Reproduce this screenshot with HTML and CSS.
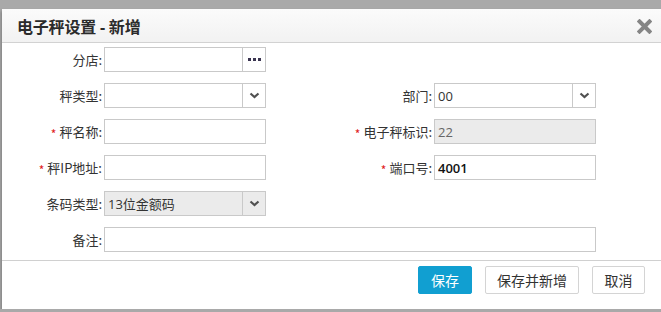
FILE: index.html
```html
<!DOCTYPE html>
<html lang="zh-CN">
<head>
    <meta charset="UTF-8">
    <title>电子秤设置 - 新增</title>
    <link rel="stylesheet" href="styles.css">
</head>
<body>
    <div class="dialog">
        <div class="dialog-header">
            <span class="dialog-title">电子秤设置 - 新增</span>
            <span class="dialog-close">
                <svg width="15" height="15" viewBox="0 0 15 15">
                    <path d="M2.5 2.5 L12.5 12.5 M12.5 2.5 L2.5 12.5" stroke="#858585" stroke-width="4" stroke-linecap="square"/>
                </svg>
            </span>
        </div>

        <div class="form">
            <label class="label">分店:</label>
            <div class="field">
                <input class="field-input" type="text">
                <span class="field-btn">
                    <svg width="13" height="4" viewBox="0 0 13 4">
                        <rect x="0" y="0" width="3" height="3" fill="#3a3450"/>
                        <rect x="5" y="0" width="3" height="3" fill="#3a3450"/>
                        <rect x="10" y="0" width="3" height="3" fill="#3a3450"/>
                    </svg>
                </span>
            </div>
            <div class="blank"></div>
            <div class="blank"></div>

            <label class="label">秤类型:</label>
            <div class="field">
                <input class="field-input" type="text">
                <span class="field-btn">
                    <svg width="11" height="7" viewBox="0 0 11 7">
                        <path d="M1.5 1.5 L5.5 5 L9.5 1.5" fill="none" stroke="#505050" stroke-width="2.2"/>
                    </svg>
                </span>
            </div>
            <label class="label">部门:</label>
            <div class="field">
                <input class="field-input" type="text" value="00">
                <span class="field-btn">
                    <svg width="11" height="7" viewBox="0 0 11 7">
                        <path d="M1.5 1.5 L5.5 5 L9.5 1.5" fill="none" stroke="#505050" stroke-width="2.2"/>
                    </svg>
                </span>
            </div>

            <label class="label"><span class="req">*</span> 秤名称:</label>
            <div class="field">
                <input class="field-input" type="text">
            </div>
            <label class="label"><span class="req">*</span> 电子秤标识:</label>
            <div class="field disabled">
                <input class="field-input" type="text" value="22" disabled>
            </div>

            <label class="label"><span class="req">*</span> 秤IP地址:</label>
            <div class="field">
                <input class="field-input" type="text">
            </div>
            <label class="label"><span class="req">*</span> 端口号:</label>
            <div class="field">
                <input class="field-input strong" type="text" value="4001">
            </div>

            <label class="label">条码类型:</label>
            <div class="field disabled">
                <input class="field-input dark" type="text" value="13位金额码" disabled>
                <span class="field-btn">
                    <svg width="11" height="7" viewBox="0 0 11 7">
                        <path d="M1.5 1.5 L5.5 5 L9.5 1.5" fill="none" stroke="#505050" stroke-width="2.2"/>
                    </svg>
                </span>
            </div>
            <div class="blank"></div>
            <div class="blank"></div>

            <label class="label">备注:</label>
            <div class="field wide">
                <input class="field-input" type="text">
            </div>
        </div>

        <div class="dialog-footer">
            <button class="btn btn-primary">保存</button>
            <button class="btn btn-wide">保存并新增</button>
            <button class="btn">取消</button>
        </div>
    </div>
</body>
</html>
```

FILE: styles.css
```css
body {
    margin: 0;
    background-color: #a9a9a9;
    font-family: "Open Sans", "Noto Sans CJK SC", sans-serif;
    color: #333;
    overflow: hidden;
}
.dialog {
    margin: 9px 0 0 2px;
    width: 659px;
    height: 300px;
    background: white;
    box-shadow: -1px 2px 3px rgba(0,0,0,0.25);
}
.dialog-header {
    height: 33px;
    background: linear-gradient(#fbfbfb, #f2f2f2);
    border-bottom: 1px solid #d2d2d2;
    display: flex;
    align-items: center;
    justify-content: space-between;
    padding: 0 9px 0 15px;
}
.dialog-title {
    font-size: 16px;
    font-weight: bold;
    color: #2b2b2b;
    letter-spacing: -0.2px;
}
.dialog-close {
    display: flex;
    margin-top: 2px;
}
.form {
    display: grid;
    grid-template-columns: 100px 162px 164px 162px;
    grid-auto-rows: 25px;
    column-gap: 2px;
    row-gap: 11px;
    padding-top: 4px;
}
.label {
    font-family: "Noto Sans CJK SC", sans-serif;
    font-size: 13px;
    color: #333;
    text-align: right;
    line-height: 25px;
    white-space: nowrap;
}
.req {
    color: #e02020;
    font-size: 12px;
    position: relative;
    top: 2px;
}
.field {
    display: flex;
    border: 1px solid #c9c9c9;
    background: white;
    box-sizing: border-box;
    height: 25px;
}
.field.disabled {
    background: #ebebeb;
}
.field.wide {
    grid-column: 2 / 5;
}
.field-input {
    flex: 1;
    min-width: 0;
    border: none;
    outline: none;
    background: transparent;
    padding: 0 3px;
    font-family: "Open Sans", "Noto Sans CJK SC", sans-serif;
    font-size: 13px;
    color: #333;
}
.field-input:disabled {
    color: #666;
}
.field-input.dark {
    color: #333;
}
.field-input.strong {
    font-weight: 600;
    color: #111;
}
.field-btn {
    width: 22px;
    border-left: 1px solid #c9c9c9;
    display: flex;
    align-items: center;
    justify-content: center;
}
.dialog-footer {
    margin-top: 8px;
    border-top: 1px solid #d0d0d0;
    display: flex;
    justify-content: flex-end;
    gap: 13px;
    padding: 5px 16px 0 0;
}
.btn {
    height: 28px;
    width: 53px;
    padding: 0;
    border: 1px solid #d4d4d4;
    border-radius: 2px;
    background: white;
    font-family: "Noto Sans CJK SC", sans-serif;
    font-size: 14px;
    color: #333;
}
.btn-primary {
    width: 54px;
    background-color: #119fd1;
    border-color: #119fd1;
    color: white;
}
.btn-wide {
    width: 94px;
}
```
